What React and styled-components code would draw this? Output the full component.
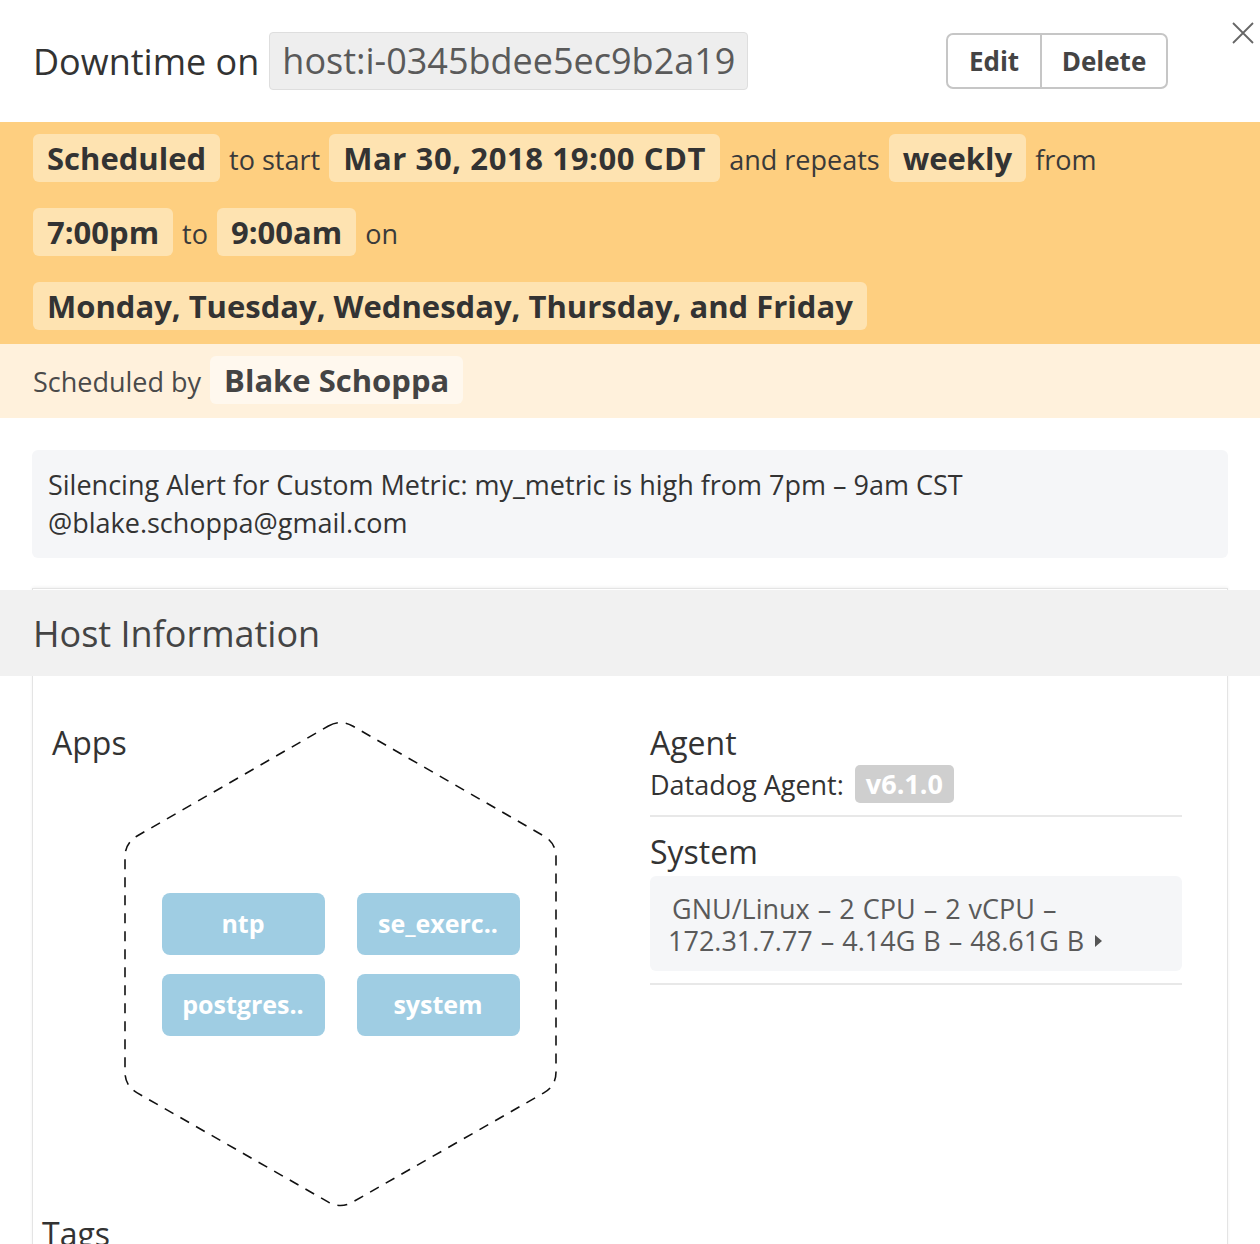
import React from 'react';
import styled, { createGlobalStyle } from 'styled-components';

const GlobalStyle = createGlobalStyle`
  body {
    margin: 0;
    background: #fff;
    font-family: "Open Sans", "Liberation Sans", sans-serif;
    color: #333;
  }
`;

const Panel = styled.div`
  position: relative;
  width: 1260px;
  background: #fff;
`;

const Header = styled.div`
  display: flex;
  align-items: center;
  height: 122px;
  padding: 0 92px 0 33px;
`;

const Title = styled.h1`
  margin: 0;
  font-size: 36px;
  font-weight: 400;
  color: #333;
`;

const HostTag = styled.span`
  margin-left: 10px;
  height: 56px;
  line-height: 56px;
  padding: 0 12px;
  background: #eeeeee;
  border: 1px solid #dedede;
  border-radius: 4px;
  font-size: 36px;
  color: #5a5a5a;
`;

const ButtonGroup = styled.div`
  display: flex;
  margin-left: auto;
  border: 2px solid #c6c6c6;
  border-radius: 7px;
  height: 52px;
  overflow: hidden;
`;

const GroupButton = styled.button`
  all: unset;
  width: ${props => props.width}px;
  text-align: center;
  font-size: 26px;
  font-weight: 700;
  color: #444;
  line-height: 52px;
  border-left: ${props => props.divided ? '2px solid #c6c6c6' : 'none'};
`;

const CloseButton = styled.button`
  all: unset;
  position: absolute;
  top: 22px;
  right: 6px;
  width: 22px;
  height: 22px;
  cursor: pointer;
`;

const ScheduleBand = styled.div`
  display: flex;
  flex-direction: column;
  gap: 26px;
  background: #fecf80;
  padding: 12px 33px 14px;
`;

const ScheduleRow = styled.div`
  display: flex;
  align-items: baseline;
  gap: 9px;
`;

const Chip = styled.span`
  display: inline-block;
  height: 48px;
  line-height: 48px;
  padding: 0 14px;
  border-radius: 6px;
  background: ${props => props.light ? '#fff8ee' : '#fee3b1'};
  font-size: 31px;
  font-weight: 700;
  color: ${props => props.light ? '#444' : '#333'};
  letter-spacing: ${props => props.wide ? '0.6px' : '0'};
`;

const Word = styled.span`
  font-size: 27px;
  color: ${props => props.muted ? '#4a4a4a' : '#3a3a3a'};
`;

const AuthorBand = styled.div`
  display: flex;
  align-items: baseline;
  gap: 9px;
  background: #fff1dc;
  padding: 12px 33px 14px;
`;

const Message = styled.div`
  margin: 32px 32px 30px;
  padding: 16px;
  background: #f5f6f8;
  border-radius: 6px;
  font-size: 27px;
  line-height: 38px;
  color: #333;
`;

const Card = styled.div`
  margin: 0 32px;
  border: 1px solid #e4e4e4;
  border-bottom: none;
  box-shadow: 0 -1px 3px rgba(0, 0, 0, 0.06);
`;

const CardHeader = styled.h2`
  display: flex;
  align-items: center;
  height: 86px;
  margin: 1px -33px 0;
  padding: 0 33px;
  background: #f1f1f1;
  font-size: 36px;
  font-weight: 400;
  color: #444;
`;

const CardBody = styled.div`
  display: grid;
  grid-template-columns: 578px 532px;
  column-gap: 20px;
  padding: 42px 0 0 19px;
`;

const AppsRow = styled.div`
  display: flex;
  align-items: flex-start;
`;

const SectionTitle = styled.h3`
  margin: ${props => props.top || 5}px 0 0;
  width: ${props => props.width || 'auto'};
  font-size: 32px;
  line-height: 40px;
  font-weight: 400;
  color: #333;
  white-space: nowrap;
`;

const Hex = styled.div`
  position: relative;
  display: flex;
  align-items: center;
  justify-content: center;
  width: 433px;
  height: 492px;
  flex-shrink: 0;
`;

const HexOutline = styled.svg`
  position: absolute;
  inset: 0;
`;

const AppGrid = styled.div`
  position: relative;
  display: grid;
  grid-template-columns: 163px 163px;
  column-gap: 32px;
  row-gap: 19px;
`;

const AppChip = styled.div`
  height: 62px;
  line-height: 60px;
  border-radius: 8px;
  background: #9fcde3;
  color: #fff;
  font-size: 25px;
  font-weight: 700;
  text-align: center;
`;

const TagsTitle = styled(SectionTitle)`
  margin: 4px 0 0 -10px;
`;

const InfoColumn = styled.div`
  display: flex;
  flex-direction: column;
`;

const AgentRow = styled.div`
  display: flex;
  align-items: center;
  gap: 11px;
  margin-top: 2px;
  font-size: 27px;
  color: #333;
`;

const VersionBadge = styled.span`
  height: 38px;
  line-height: 38px;
  padding: 0 11px;
  border-radius: 5px;
  background: #cfcfcf;
  color: #fff;
  font-weight: 700;
`;

const Divider = styled.div`
  height: 2px;
  background: #e8e8e8;
  margin-top: ${props => props.top}px;
`;

const SystemBox = styled.div`
  margin-top: 4px;
  padding: 17px 18px 14px;
  border-radius: 6px;
  background: #f5f6f8;
  font-size: 27px;
  line-height: 32px;
  color: #5a5a5a;
  word-spacing: 1px;
`;

const SystemLine = styled.div`
  padding-left: ${props => props.indent || 0}px;
  display: flex;
  align-items: center;
  gap: 10px;
`;

const apps = ['ntp', 'se_exerc..', 'postgres..', 'system'];

const hexPath =
  'M204.4,8 Q216.5,1 228.6,8 L419.9,118 Q432,125 432,139 L432,354 Q432,368 419.8,374.9 ' +
  'L228.6,484.1 Q216.5,491 204.4,484.1 L13.2,374.9 Q1,368 1,354 L1,139 Q1,125 13.1,118 Z';

const App = () => {
  return <Panel>
    <GlobalStyle />
    <Header>
      <Title>Downtime on</Title>
      <HostTag>host:i-0345bdee5ec9b2a19</HostTag>
      <ButtonGroup>
        <GroupButton width={92}>Edit</GroupButton>
        <GroupButton width={124} divided>Delete</GroupButton>
      </ButtonGroup>
    </Header>
    <CloseButton aria-label="Close">
      <svg width="22" height="22" viewBox="0 0 22 22">
        <path d="M1 1 L21 21 M21 1 L1 21" stroke="#666" strokeWidth="1.8" />
      </svg>
    </CloseButton>

    <ScheduleBand>
      <ScheduleRow>
        <Chip>Scheduled</Chip>
        <Word>to start</Word>
        <Chip wide>Mar 30, 2018 19:00 CDT</Chip>
        <Word>and repeats</Word>
        <Chip>weekly</Chip>
        <Word>from</Word>
      </ScheduleRow>
      <ScheduleRow>
        <Chip>7:00pm</Chip>
        <Word>to</Word>
        <Chip>9:00am</Chip>
        <Word>on</Word>
      </ScheduleRow>
      <ScheduleRow>
        <Chip>Monday, Tuesday, Wednesday, Thursday, and Friday</Chip>
      </ScheduleRow>
    </ScheduleBand>
    <AuthorBand>
      <Word muted>Scheduled by</Word>
      <Chip light>Blake Schoppa</Chip>
    </AuthorBand>

    <Message>
      Silencing Alert for Custom Metric: my_metric is high from 7pm – 9am CST<br />
      @blake.schoppa@gmail.com
    </Message>

    <Card>
      <CardHeader>Host Information</CardHeader>
      <CardBody>
        <div>
          <AppsRow>
            <SectionTitle width="72px">Apps</SectionTitle>
            <Hex>
              <HexOutline width="433" height="492" viewBox="0 0 433 492">
                <path d={hexPath} fill="none" stroke="#111" strokeWidth="1.6" strokeDasharray="10 8" />
              </HexOutline>
              <AppGrid>
                {apps.map(app => <AppChip key={app}>{app}</AppChip>)}
              </AppGrid>
            </Hex>
          </AppsRow>
          <TagsTitle>Tags</TagsTitle>
        </div>
        <InfoColumn>
          <SectionTitle>Agent</SectionTitle>
          <AgentRow>
            Datadog Agent:
            <VersionBadge>v6.1.0</VersionBadge>
          </AgentRow>
          <Divider top={12} />
          <SectionTitle top={15}>System</SectionTitle>
          <SystemBox>
            <SystemLine indent={4}>GNU/Linux – 2 CPU – 2 vCPU –</SystemLine>
            <SystemLine>
              172.31.7.77 – 4.14G B – 48.61G B
              <svg width="9" height="14" viewBox="0 0 9 14">
                <path d="M1 1 L8 7 L1 13 Z" fill="#555" />
              </svg>
            </SystemLine>
          </SystemBox>
          <Divider top={12} />
        </InfoColumn>
      </CardBody>
    </Card>
  </Panel>
}

export default App;
